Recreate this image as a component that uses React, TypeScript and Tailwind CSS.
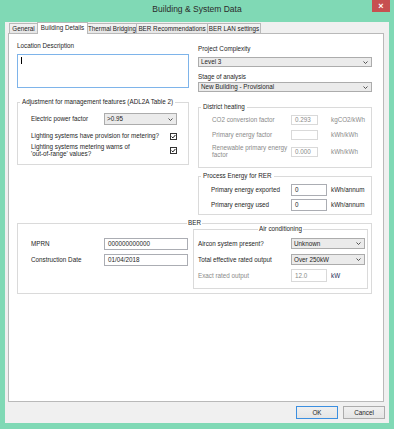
import React from 'react';

function Chevron() {
  return (
    <svg width="5" height="3" viewBox="0 0 5 3" className="shrink-0">
      <path d="M0.5 0.5 L2.5 2.5 L4.5 0.5" fill="none" stroke="#404040" strokeWidth="0.9" />
    </svg>
  );
}

function Select({ value, w, h }: { value: string; w: string; h: string }) {
  return (
    <div className={`${w} ${h} flex items-center justify-between border border-[#acacac] bg-[#ebebeb] pl-[2px] pr-[3px] text-[#1e1e1e]`}>
      <span>{value}</span>
      <Chevron />
    </div>
  );
}

function Input({ value, w, h, disabled }: { value: string; w: string; h: string; disabled?: boolean }) {
  return (
    <div
      className={`${w} ${h} flex items-center border bg-white pl-[3px] ${
        disabled ? 'border-[#d9d9d9] text-[#8a8a8a]' : 'border-[#abadb3] text-[#1e1e1e]'
      }`}
    >
      {value}
    </div>
  );
}

function Check() {
  return (
    <div className="w-[7px] h-[7px] border border-[#333] bg-white flex items-center justify-center">
      <svg width="5" height="5" viewBox="0 0 5 5">
        <path d="M0.6 2.6 L1.9 3.9 L4.4 1" fill="none" stroke="#111" strokeWidth="1" />
      </svg>
    </div>
  );
}

function Tab({ label, w, active }: { label: string; w: string; active?: boolean }) {
  if (active) {
    return (
      <div className={`${w} h-[12px] -ml-px border border-b-0 border-[#b9b9b9] bg-white flex items-start justify-center pt-[1px] text-[#1e1e1e]`}>
        {label}
      </div>
    );
  }
  return (
    <div className={`${w} h-[10px] mb-px -ml-px border border-b-0 border-[#b9b9b9] bg-gradient-to-b from-[#f3f3f3] to-[#e6e6e6] flex items-center justify-center text-[#1e1e1e]`}>
      {label}
    </div>
  );
}

export default function App() {
  return (
    <div className="w-[394px] h-[429px] bg-[#80d9b5] flex flex-col font-['Liberation_Sans',Arial,sans-serif] text-[6.3px] leading-[8px] text-[#1e1e1e]">
      {/* title bar */}
      <div className="relative h-[22px] flex justify-center pt-[4px]">
        <span className="text-[8.5px] leading-[10px] text-[#2b2b2b]">Building &amp; System Data</span>
        <div className="absolute right-[4px] top-0 w-[18px] h-[12px] bg-[#c75050] flex items-center justify-center text-white text-[9px] leading-[10px] font-bold">
          ×
        </div>
      </div>

      {/* client */}
      <div className="mx-[5px] h-[401px] bg-[#f0f0f0] pl-[3px] pr-[5px] flex flex-col">
        {/* tabs */}
        <div className="relative z-10 flex items-end h-[12px] pl-[2px]">
          <Tab label="General" w="w-[29px]" />
          <Tab label="Building Details" w="w-[51px]" active />
          <Tab label="Thermal Bridging" w="w-[50px]" />
          <Tab label="BER Recommendations" w="w-[72px]" />
          <Tab label="BER LAN settings" w="w-[54px]" />
        </div>

        {/* panel */}
        <div className="-mt-px h-[369px] border border-[#b9b9b9] bg-white pl-[8px] pr-[11px]">
          <div className="grid grid-cols-[172px_174px] gap-x-[9px]">
            {/* left column */}
            <div className="flex flex-col">
              <div className="mt-[8px]">Location Description</div>
              <div className="mt-[4px] h-[34px] border border-[#7eb4ea] bg-white pl-[3px] pt-[2px]">
                <div className="w-px h-[7px] bg-black" />
              </div>
              <fieldset className="mt-[10px] border border-[#dadada]">
                <legend className="ml-[2px] px-[2px]">Adjustment for management features (ADL2A Table 2)</legend>
                <div className="pl-[13px] pr-[11px] pb-[7px]">
                  <div className="mt-[7px] flex items-center justify-between h-[12px]">
                    <span>Electric power factor</span>
                    <Select value=">0.95" w="w-[73px]" h="h-[12px]" />
                  </div>
                  <div className="mt-[7px] flex items-center justify-between h-[8px]">
                    <span>Lighting systems have provision for metering?</span>
                    <Check />
                  </div>
                  <div className="mt-[3px] flex items-center justify-between leading-[7px]">
                    <span>
                      Lighting systems metering warns of
                      <br />
                      'out-of-range' values?
                    </span>
                    <Check />
                  </div>
                </div>
              </fieldset>
            </div>

            {/* right column */}
            <div className="flex flex-col">
              <div className="mt-[11px]">Project Complexity</div>
              <div className="mt-[4px]">
                <Select value="Level 3" w="w-full" h="h-[10px]" />
              </div>
              <div className="mt-[6px]">Stage of analysis</div>
              <div className="mt-[1px]">
                <Select value="New Building - Provisional" w="w-full" h="h-[10px]" />
              </div>

              <fieldset className="mt-[11px] border border-[#dadada]">
                <legend className="ml-[2px] px-[2px]">District heating</legend>
                <div className="pl-[13px] pb-[9px] text-[#8a8a8a] grid grid-cols-[79px_40px_1fr] items-center">
                  <span className="mt-[4px]">CO2 conversion factor</span>
                  <div className="mt-[4px]"><Input value="0.293" w="w-[27px]" h="h-[10px]" disabled /></div>
                  <span className="mt-[4px]">kgCO2/kWh</span>
                  <span className="mt-[5px]">Primary energy factor</span>
                  <div className="mt-[5px]"><Input value="" w="w-[27px]" h="h-[10px]" disabled /></div>
                  <span className="mt-[5px]">kWh/kWh</span>
                  <span className="mt-[5px] leading-[6.5px]">
                    Renewable primary energy
                    <br />
                    factor
                  </span>
                  <div className="mt-[5px]"><Input value="0.000" w="w-[27px]" h="h-[10px]" disabled /></div>
                  <span className="mt-[5px]">kWh/kWh</span>
                </div>
              </fieldset>

              <fieldset className="mt-[4px] border border-[#dadada]">
                <legend className="ml-[2px] px-[2px]">Process Energy for RER</legend>
                <div className="pl-[12px] pb-[3px] grid grid-cols-[80px_40px_1fr] items-center">
                  <span className="mt-[4px]">Primary energy exported</span>
                  <div className="mt-[4px]"><Input value="0" w="w-[36px]" h="h-[12px]" /></div>
                  <span className="mt-[4px]">kWh/annum</span>
                  <span className="mt-[3px]">Primary energy used</span>
                  <div className="mt-[3px]"><Input value="0" w="w-[36px]" h="h-[12px]" /></div>
                  <span className="mt-[3px]">kWh/annum</span>
                </div>
              </fieldset>
            </div>
          </div>

          {/* BER */}
          <fieldset className="mt-[4px] border border-[#dadada]">
            <legend className="mx-auto px-[1px]">BER</legend>
            <div className="flex pr-[3px] pb-[4px]">
              <div className="w-[175px] pl-[13px] grid grid-cols-[73px_84px] items-center content-start">
                <span className="mt-[11px]">MPRN</span>
                <div className="mt-[11px]"><Input value="000000000000" w="w-[84px]" h="h-[12px]" /></div>
                <span className="mt-[4px]">Construction Date</span>
                <div className="mt-[4px]"><Input value="01/04/2018" w="w-[84px]" h="h-[12px]" /></div>
              </div>
              <fieldset className="-mt-[2px] flex-1 border border-[#dadada]">
                <legend className="mx-auto px-[1px]">Air conditioning</legend>
                <div className="pl-[4px] pb-[6px] grid grid-cols-[93px_40px_1fr] items-center">
                  <span className="mt-[5px]">Aircon system present?</span>
                  <div className="mt-[5px] col-span-2"><Select value="Unknown" w="w-[74px]" h="h-[11px]" /></div>
                  <span className="mt-[5px]">Total effective rated output</span>
                  <div className="mt-[5px] col-span-2"><Select value="Over 250kW" w="w-[74px]" h="h-[11px]" /></div>
                  <span className="mt-[4px] text-[#8a8a8a]">Exact rated output</span>
                  <div className="mt-[4px]"><Input value="12.0" w="w-[36px]" h="h-[13px]" disabled /></div>
                  <span className="mt-[4px] text-[#1a2a55]">kW</span>
                </div>
              </fieldset>
            </div>
          </fieldset>
        </div>

        {/* buttons */}
        <div className="mt-[4px] flex justify-end gap-[5px] -mr-px">
          <div className="w-[42px] h-[13px] border border-[#3c8fe0] bg-gradient-to-b from-[#f0f0f0] to-[#e5e5e5] flex items-center justify-center">
            OK
          </div>
          <div className="w-[42px] h-[13px] border border-[#acacac] bg-gradient-to-b from-[#f0f0f0] to-[#e5e5e5] flex items-center justify-center">
            Cancel
          </div>
        </div>
      </div>
    </div>
  );
}
